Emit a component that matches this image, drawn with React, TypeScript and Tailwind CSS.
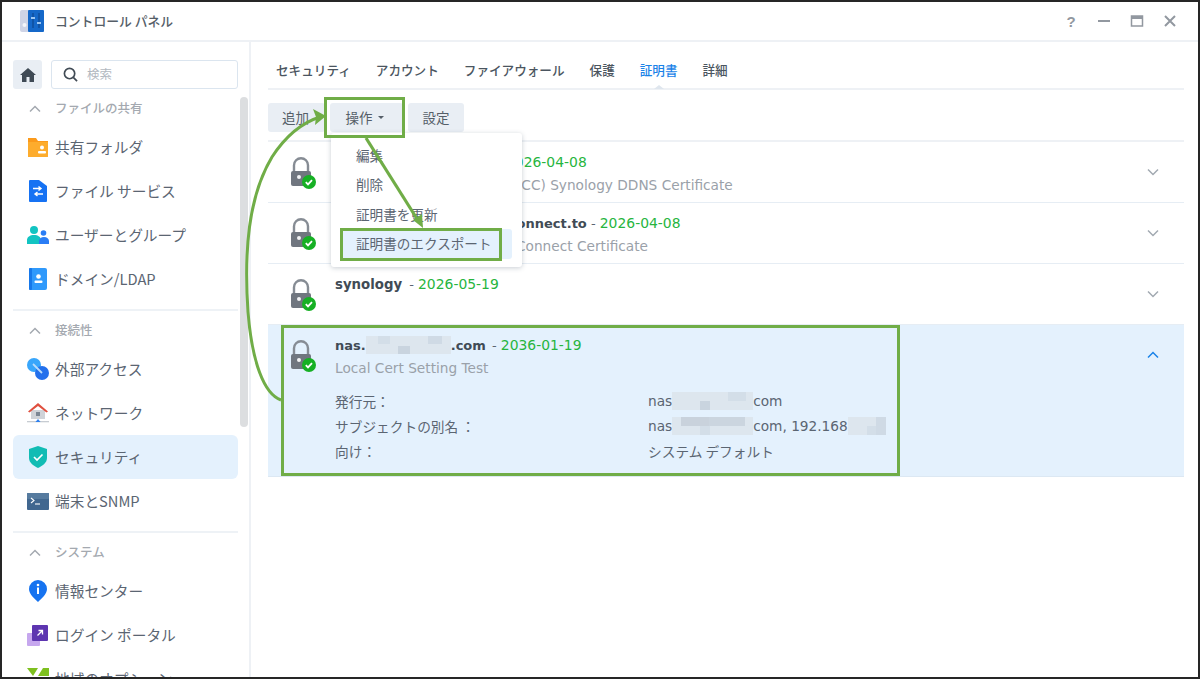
import React from "react";

const JP = "font-['Noto_Sans_CJK_JP','Noto_Sans',sans-serif]";
const LAT = "font-['DejaVu_Sans','Noto_Sans_CJK_JP',sans-serif]";

function Chevron({ className = "" }: { className?: string }) {
  return (
    <svg viewBox="0 0 12 8" className={className} fill="none" stroke="currentColor" strokeWidth="1.5">
      <path d="M1 6.5 6 1.5l5 5" />
    </svg>
  );
}

function Lock() {
  return (
    <svg viewBox="0 0 28 36" className="w-[28px] h-[36px] shrink-0">
      <path d="M5 15V8.200a7 7 0 0 1 14 0V15" fill="none" stroke="#868c94" strokeWidth="2.400" />
      <rect x="2" y="14" width="20" height="15" rx="2" fill="#70767f" />
      <circle cx="10" cy="20" r="2" fill="#f3f4f5" />
      <circle cx="20" cy="25" r="7" fill="#16b024" />
      <path d="M16.800 25.200 19 27.400l4-4.300" fill="none" stroke="#fff" strokeWidth="1.800" />
    </svg>
  );
}

function Mosaic({ w, cells }: { w: number; cells: [number, number, number, number, string][] }) {
  return (
    <svg width={w} height={18} viewBox={`0 0 ${w} 18`} className="inline-block align-[-4px]">
      <rect x="0" y="0" width={w} height="18" fill="#dde6ee" />
      {cells.map((c, i) => (
        <rect key={i} x={c[0]} y={c[1]} width={c[2]} height={c[3]} fill={c[4]} />
      ))}
    </svg>
  );
}

const Icons: Record<string, React.ReactNode> = {
  folder: (
    <svg viewBox="0 0 22 20" className="w-[22px] h-[20px]">
      <path d="M1 1h8l2 3h10v15a1 1 0 0 1-1 1H1z" fill="#fb9a1b" />
      <path d="M1 5h20v14a1 1 0 0 1-1 1H1z" fill="#fdac2d" />
      <circle cx="15" cy="10.500" r="2" fill="#fff" />
      <rect x="11" y="14" width="8" height="2.500" rx="1" fill="#fff" />
    </svg>
  ),
  file: (
    <svg viewBox="0 0 20 22" className="w-[20px] h-[22px]">
      <path d="M1 1a1 1 0 0 1 1-1h9l8 6v15a1 1 0 0 1-1 1H2a1 1 0 0 1-1-1z" fill="#1672f3" />
      <path d="M5 8.500h8m-2.500-2 2.500 2-2.500 2M15 14H7m2.500-2L7 14l2.500 2" fill="none" stroke="#fff" strokeWidth="1.400" />
    </svg>
  ),
  users: (
    <svg viewBox="0 0 22 20" className="w-[22px] h-[20px]">
      <circle cx="7" cy="5" r="4" fill="#12c4c2" />
      <path d="M0 19v-4c0-3 3-5 7-5s7 2 7 5v4z" fill="#12c4c2" />
      <circle cx="16.500" cy="8" r="2.800" fill="#2a7df5" />
      <path d="M12 19v-3c0-2 2-4 5-4s5 2 5 4v3z" fill="#2a7df5" />
    </svg>
  ),
  domain: (
    <svg viewBox="0 0 20 22" className="w-[20px] h-[22px]">
      <rect x="1" y="0" width="18" height="22" rx="2" fill="#2f99fb" />
      <rect x="1" y="0" width="3" height="22" rx="1" fill="#1678ea" />
      <circle cx="10.500" cy="8.500" r="2.300" fill="#fff" />
      <rect x="6.500" y="12.500" width="8" height="2.500" rx="1" fill="#fff" />
    </svg>
  ),
  ext: (
    <svg viewBox="0 0 22 22" className="w-[22px] h-[22px]">
      <circle cx="7" cy="7" r="7" fill="#38a6fb" />
      <circle cx="15" cy="15" r="7" fill="#2370ec" />
      <path d="M6 6l9 9" stroke="#b8dcfb" strokeWidth="1.800" />
    </svg>
  ),
  net: (
    <svg viewBox="0 0 22 22" className="w-[22px] h-[22px]">
      <path d="M4 8h14v9H4z" fill="#cfd3d8" />
      <path d="M1 9.500 11 1l10 8.500-1.500 1L11 4l-8.500 6.500z" fill="#e0503f" />
      <rect x="9" y="10" width="4" height="4" fill="#7b8794" />
      <rect x="0" y="19" width="22" height="1.300" fill="#c7ccd2" />
      <path d="M8.500 20 11 17l2.500 3z" fill="#2f80ed" />
    </svg>
  ),
  shield: (
    <svg viewBox="0 0 20 22" className="w-[20px] h-[22px]">
      <path d="M10 0l9 3v9c0 5-5 8-9 10-4-2-9-5-9-10V3z" fill="#11bcb4" />
      <path d="M6 11l3 3 5.500-5.500" fill="none" stroke="#fff" strokeWidth="1.700" />
    </svg>
  ),
  term: (
    <svg viewBox="0 0 22 17" className="w-[22px] h-[17px]">
      <rect width="22" height="17" rx="1" fill="#41678f" />
      <rect width="22" height="6" rx="1" fill="#567b9f" />
      <path d="M4 5l3 2.500L4 10" fill="none" stroke="#fff" strokeWidth="1.100" />
      <path d="M8 11h5" stroke="#fff" strokeWidth="1.100" />
    </svg>
  ),
  info: (
    <svg viewBox="0 0 18 22" className="w-[18px] h-[22px]">
      <path d="M9 0a9 9 0 0 1 9 9c0 5-5 9-9 13-4-4-9-8-9-13a9 9 0 0 1 9-9z" fill="#1673f0" />
      <circle cx="9" cy="5" r="1.300" fill="#fff" />
      <rect x="8" y="7.500" width="2" height="6.500" fill="#fff" />
    </svg>
  ),
  login: (
    <svg viewBox="0 0 22 21" className="w-[22px] h-[21px]">
      <rect x="0" y="8" width="13" height="13" rx="1" fill="#c6a7ee" />
      <rect x="5" y="0" width="16" height="16" rx="1" fill="#5d35b0" />
      <path d="M10.500 10.500l5-5m-4 0h4v4" fill="none" stroke="#fff" strokeWidth="1.300" />
    </svg>
  ),
};

function Item({ icon, label, active }: { icon: string; label: string; active?: boolean }) {
  return (
    <div className={`h-[44px] shrink-0 flex items-center rounded-md ${active ? "bg-[#e4f1fd]" : ""}`}>
      <span className="w-[42px] pl-[14px] flex justify-center items-center shrink-0 pr-[6px]">{Icons[icon]}</span>
      <span className={`text-[14.700px] text-[#5b6572] ${JP}`}>{label}</span>
    </div>
  );
}

function Heading({ label }: { label: string }) {
  return (
    <div className="h-[23px] shrink-0 flex items-center text-[#a4a9b0]">
      <span className="w-[42px] flex justify-center pl-[9px] pr-[8px]"><Chevron className="w-[12px] h-[8px]" /></span>
      <span className={`text-[12.500px] font-medium ${JP}`}>{label}</span>
    </div>
  );
}

const DATE = "text-[#27b53e] text-[13.900px]";

function Row({ children, sub }: { children: React.ReactNode; sub?: React.ReactNode }) {
  return (
    <div className="h-[61px] border-b border-[#e6edf4] flex items-start">
      <div className="w-[67px] pl-[21px] pt-[15px] shrink-0"><Lock /></div>
      <div className="flex-1 pt-[10px]">
        <div className={`text-[13px] leading-[20px] ${LAT}`}>{children}</div>
        {sub ? <div className={`text-[13.700px] leading-[20px] mt-[2px] text-[#9aa1a9] ${LAT}`}>{sub}</div> : null}
      </div>
      <div className="w-[62px] pt-[26px] flex justify-center text-[#a2a9b1]">
        <Chevron className="w-[12px] h-[8px] rotate-180" />
      </div>
    </div>
  );
}

export default function App() {
  return (
    <div className="relative w-[1200px] h-[679px] overflow-hidden bg-white border-2 border-[#262626] flex flex-col">
      {/* Title bar */}
      <header className="h-[40px] shrink-0 border-b-2 border-[#eef1f5] flex items-center pl-[17px] pr-[21px]">
        <svg viewBox="0 0 26 24" className="w-[26px] h-[24px]">
          <rect x="1" y="1" width="10" height="22" rx="2" fill="#cfd4e6" />
          <circle cx="5.500" cy="16" r="2" fill="#f5f6fa" />
          <rect x="9" y="1" width="16" height="22" rx="1" fill="#1568c9" />
          <path d="M14 4v15M20 4v15" stroke="#0e4a96" strokeWidth="1.300" />
          <rect x="12" y="8" width="4" height="2" fill="#9cc6f2" />
          <rect x="18" y="13" width="4" height="2" fill="#9cc6f2" />
        </svg>
        <span className={`ml-[10px] text-[12.800px] font-medium text-[#555e68] ${JP}`}>コントロール パネル</span>
        <div className="ml-auto flex items-center gap-[19px] text-[#9298a0]">
          <span className="w-[14px] text-center text-[15px] leading-none font-bold font-['Liberation_Sans',sans-serif]">?</span>
          <svg viewBox="0 0 14 14" className="w-[14px] h-[14px]"><path d="M1 7h12" stroke="currentColor" strokeWidth="2" /></svg>
          <svg viewBox="0 0 14 14" className="w-[14px] h-[14px]"><path d="M1.500 2h11v10h-11z" fill="none" stroke="currentColor" strokeWidth="1.500" /><rect x="1" y="2" width="12" height="3" fill="currentColor" /></svg>
          <svg viewBox="0 0 14 14" className="w-[14px] h-[14px]"><path d="M2 2l10 10M12 2 2 12" stroke="currentColor" strokeWidth="2" /></svg>
        </div>
      </header>

      <div className="flex-1 flex min-h-0">
        {/* Sidebar */}
        <aside className="w-[249px] shrink-0 border-r-2 border-[#eef1f5] relative overflow-hidden flex flex-col pl-[11px] pr-[11px] pt-[18px]">
          <div className="flex gap-[9px] h-[29px] shrink-0">
            <div className="w-[29px] rounded-[3px] bg-[#e9eef4] flex items-center justify-center">
              <svg viewBox="0 0 16 14" className="w-[16px] h-[14px]"><path d="M8 0l8 7h-2v7H9.500V9h-3v5H2V7H0z" fill="#3f4a55" /></svg>
            </div>
            <div className="flex-1 rounded-[3px] border border-[#dbe5ef] flex items-center pl-[11px]">
              <svg viewBox="0 0 16 16" className="w-[15px] h-[15px]" fill="none" stroke="#414b55" strokeWidth="1.800"><circle cx="7" cy="7" r="5.500" /><path d="M11 11l4 4" /></svg>
              <span className={`ml-[9px] text-[12.500px] text-[#b2b8bf] ${JP}`}>検索</span>
            </div>
          </div>
          <div className="flex flex-col mt-[8px]">
            <Heading label="ファイルの共有" />
            <div className="h-[5px]" />
            <Item icon="folder" label="共有フォルダ" />
            <Item icon="file" label="ファイル サービス" />
            <Item icon="users" label="ユーザーとグループ" />
            <Item icon="domain" label="ドメイン/LDAP" />
            <div className="h-[8px]" />
            <div className="h-[2px] bg-[#eef2f6]" />
            <div className="h-[8px]" />
            <Heading label="接続性" />
            <div className="h-[5px]" />
            <Item icon="ext" label="外部アクセス" />
            <Item icon="net" label="ネットワーク" />
            <Item icon="shield" label="セキュリティ" active />
            <Item icon="term" label="端末とSNMP" />
            <div className="h-[8px]" />
            <div className="h-[2px] bg-[#eef2f6]" />
            <div className="h-[8px]" />
            <Heading label="システム" />
            <div className="h-[5px]" />
            <Item icon="info" label="情報センター" />
            <Item icon="login" label="ログイン ポータル" />
            <div className="h-[44px] shrink-0 flex items-center pl-[14px]">
              <svg viewBox="0 0 22 22" className="w-[22px] h-[22px]"><path d="M0 0h11l-5 8zM11 8l5-8h6v8z" fill="#7ec01f" /></svg>
              <span className={`ml-[6px] text-[14.700px] text-[#5b6572] ${JP}`}>地域のオプション</span>
            </div>
          </div>
          <div className="absolute right-[1px] top-[55px] w-[8px] h-[330px] rounded bg-[#dcdee0]" />
        </aside>

        {/* Main */}
        <main className="flex-1 min-w-0 pl-[17px] pr-[14px] flex flex-col">
          <nav className={`h-[48px] shrink-0 border-b-2 border-[#eef1f5] flex items-end pb-[8px] pl-[8px] gap-[25px] text-[12.600px] font-medium text-[#4b5560] ${JP}`}>
            <span>セキュリティ</span>
            <span>アカウント</span>
            <span>ファイアウォール</span>
            <span>保護</span>
            <span className="text-[#1a83e8] relative">
              証明書
              <span className="absolute left-1/2 -translate-x-1/2 bottom-[-9px] w-0 h-0 border-x-[5px] border-x-transparent border-b-[4px] border-b-[#dfe6ee]" />
            </span>
            <span>詳細</span>
          </nav>

          <div className={`flex mt-[13px] gap-[5px] shrink-0 text-[13.500px] text-[#555e68] ${JP}`}>
            <button className="w-[57px] h-[29px] rounded-[3px] bg-[#e9eef4] text-left pl-[14px]">追加</button>
            <button className="w-[73px] h-[29px] rounded-[3px] bg-[#e9eef4] flex items-center justify-center gap-[5px] pr-[4px]">
              操作
              <span className="w-0 h-0 border-x-[3px] border-x-transparent border-t-[3px] border-t-[#555e68]" />
            </button>
            <button className="w-[56px] h-[29px] rounded-[3px] bg-[#e9eef4]">設定</button>
          </div>

          <div className="mt-[8px] border-t-2 border-[#eef1f5] flex flex-col">
            <Row sub={<span className="inline-block ml-[181px]">(CC) Synology DDNS Certificate</span>}>
              <span className={`inline-block ml-[171px] ${DATE}`}>2026-04-08</span>
            </Row>
            <Row sub={<span className="inline-block ml-[181px]">Connect Certificate</span>}>
              <b className="inline-block ml-[172px] text-[#414b55]">Connect.to</b>
              <span className="text-[#5b6572]"> - </span>
              <span className={DATE}>2026-04-08</span>
            </Row>
            <Row>
              <b className="text-[#414b55] text-[13.300px]">synology</b>
              <span className="text-[#5b6572] ml-[3px]"> - </span>
              <span className={DATE}>2026-05-19</span>
            </Row>
            <div className="h-[152px] bg-[#e4f1fd] border-b border-[#dce8f3] flex items-start">
              <div className="w-[67px] pl-[21px] pt-[15px] shrink-0"><Lock /></div>
              <div className="flex-1 pt-[10px]">
                <div className={`text-[13px] leading-[20px] ${LAT}`}>
                  <b className="text-[#414b55]">nas.</b>
                  <Mosaic w={85} cells={[[12, 0, 12, 8, "#d3dee8"], [32, 10, 12, 8, "#c9d4df"], [62, 0, 14, 8, "#cfdae5"]]} />
                  <b className="text-[#414b55]">.com</b>
                  <span className="text-[#5b6572] ml-[2px]"> - </span>
                  <span className={DATE}>2036-01-19</span>
                </div>
                <div className={`text-[13.700px] leading-[20px] mt-[2px] text-[#9aa1a9] ${LAT}`}>Local Cert Setting Test</div>
                <div className="mt-[11px] grid grid-cols-[313px_1fr] text-[13.700px] leading-[25px] text-[#5b6572]">
                  <span className={JP}>発行元：</span>
                  <span className={LAT}>nas<Mosaic w={81} cells={[[28, 9, 10, 9, "#c9d4df"], [56, 0, 18, 9, "#d3dee8"]]} />com</span>
                  <span className={JP}>サブジェクトの別名 ：</span>
                  <span className={LAT}>nas<Mosaic w={81} cells={[[9, 0, 28, 9, "#c9d2dc"], [37, 0, 36, 9, "#cbd5df"], [28, 9, 10, 9, "#d3dee8"]]} />com, 192.168<Mosaic w={38} cells={[[28, 0, 10, 18, "#cfdae5"], [19, 9, 9, 9, "#d3dee8"]]} /></span>
                  <span className={JP}>向け：</span>
                  <span className={JP}>システム デフォルト</span>
                </div>
              </div>
              <div className="w-[62px] pt-[26px] flex justify-center text-[#1a83e8]">
                <Chevron className="w-[12px] h-[8px]" />
              </div>
            </div>
          </div>
        </main>
      </div>

      {/* Dropdown menu (over the list) */}
      <div className={`absolute left-[329px] top-[131px] w-[191px] h-[134px] bg-white rounded-[3px] shadow-[0_1px_5px_rgba(60,80,100,0.28)] flex flex-col pt-[7px] px-[10px] text-[13.600px] text-[#5b6572] ${JP}`}>
        <div className="h-[29.500px] flex items-center pl-[15px]">編集</div>
        <div className="h-[29.500px] flex items-center pl-[15px]">削除</div>
        <div className="h-[29.500px] flex items-center pl-[15px]">証明書を更新</div>
        <div className="h-[30px] flex items-center pl-[15px] bg-[#e4f1fd] rounded-[3px]">証明書のエクスポート</div>
      </div>

      {/* Annotations */}
      <div className="absolute left-[322px] top-[95px] w-[81px] h-[41px] border-[3px] border-[#70ad47]" />
      <div className="absolute left-[338px] top-[226px] w-[162px] h-[33px] border-[3px] border-[#70ad47]" />
      <div className="absolute left-[279px] top-[323px] w-[619px] h-[151px] border-[3px] border-[#70ad47]" />
      <svg className="absolute left-0 top-0 w-[1196px] h-[675px] pointer-events-none" viewBox="0 0 1196 675" fill="none">
        <path d="M279 398C262 392 250 360 246 310C242 250 246 195 270 155C285 132 302 120 318 115" stroke="#70ad47" strokeWidth="3" />
        <path d="M324 114l-13-7 3 8-1 8z" fill="#70ad47" />
        <path d="M364 136l53 84" stroke="#70ad47" strokeWidth="3.200" />
        <path d="M421 226l-1-14-9 6z" fill="#70ad47" />
      </svg>
    </div>
  );
}
